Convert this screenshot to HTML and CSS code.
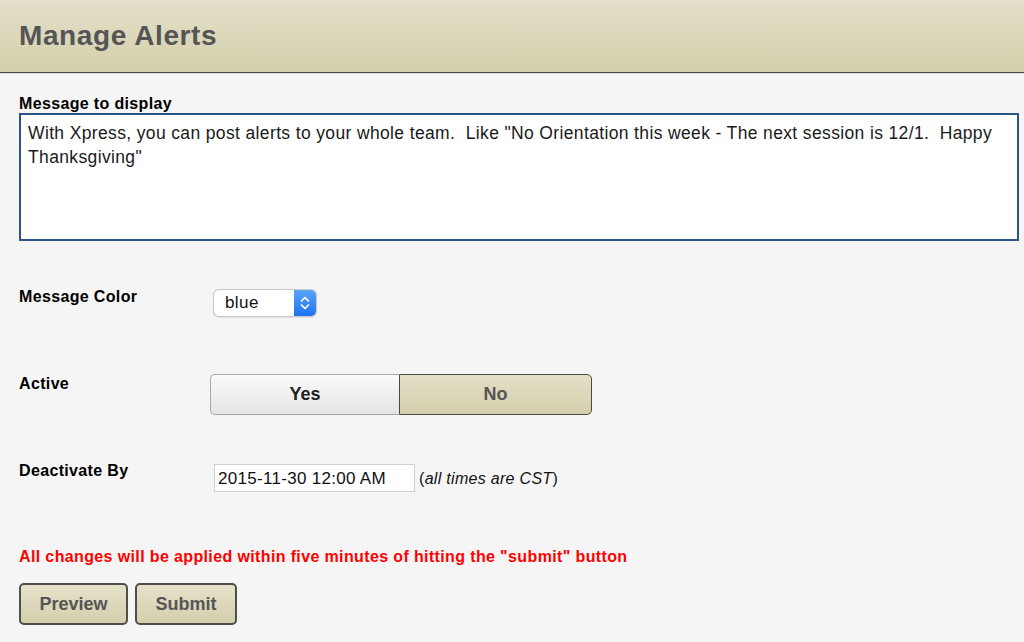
FILE: index.html
```html
<!DOCTYPE html>
<html>
<head>
<meta charset="utf-8">
<link rel="stylesheet" href="styles.css">
</head>
<body>
<header class="header">
  <h1 class="title">Manage Alerts</h1>
</header>
<main class="content">
  <label class="label-top">Message to display</label>
  <div class="textarea">With Xpress, you can post alerts to your whole team.&nbsp; Like "No Orientation this week - The next session is 12/1.&nbsp; Happy Thanksgiving"</div>

  <div class="row row-color">
    <div class="label">Message Color</div>
    <div class="select">
      <span class="select-text">blue</span>
      <span class="select-arrow">
        <svg width="12" height="18" viewBox="0 0 12 18"><path d="M2.5 7 L6 3.5 L9.5 7 M2.5 11 L6 14.5 L9.5 11" fill="none" stroke="#fff" stroke-width="1.7" stroke-linecap="round" stroke-linejoin="round"/></svg>
      </span>
    </div>
  </div>

  <div class="row row-active">
    <div class="label">Active</div>
    <div class="toggle">
      <div class="toggle-opt toggle-yes">Yes</div>
      <div class="toggle-opt toggle-no">No</div>
    </div>
  </div>

  <div class="row row-date">
    <div class="label">Deactivate By</div>
    <div class="date-input">2015-11-30 12:00 AM</div>
    <span class="note">(<i>all times are CST</i>)</span>
  </div>

  <p class="warning">All changes will be applied within five minutes of hitting the "submit" button</p>

  <div class="buttons">
    <button class="btn btn-preview">Preview</button>
    <button class="btn btn-submit">Submit</button>
  </div>
</main>
</body>
</html>
```
FILE: styles.css
```css
html, body {
  margin: 0;
  padding: 0;
}
body {
  background: #f5f5f5;
  font-family: "Liberation Sans", Arial, Helvetica, sans-serif;
  color: #000;
  width: 1024px;
  height: 642px;
  overflow: hidden;
}
.header {
  height: 72px;
  background: linear-gradient(#e5e1ca, #d3ceab);
  border-bottom: 1px solid #4a4a45;
  box-shadow: 0 1px 0 #dcdcdc;
  display: flex;
  align-items: center;
  padding-left: 19px;
}
.title {
  margin: 0;
  font-size: 28px;
  letter-spacing: 0.6px;
  font-weight: bold;
  color: #555;
}
.content {
  padding: 0 5px 0 19px;
}
.label-top {
  display: block;
  font-size: 16px;
  letter-spacing: 0.35px;
  font-weight: bold;
  margin-top: 21px;
  line-height: 19px;
}
.textarea {
  box-sizing: border-box;
  width: 1000px;
  height: 128px;
  background: #fff;
  border: 2px solid #2d5486;
  padding: 6px 7px;
  font-size: 17.5px;
  letter-spacing: 0.36px;
  line-height: 24px;
  color: #1a1a1a;
}
.row {
  display: flex;
  align-items: flex-start;
}
.label {
  width: 191px;
  font-size: 16px;
  letter-spacing: 0.35px;
  font-weight: bold;
  line-height: 19px;
}
.row-color {
  margin-top: 46px;
}
.row-color .label {
  width: 195px;
}
.select {
  margin-top: 3px;
  width: 102px;
  height: 26px;
  box-sizing: border-box;
  border-radius: 5px;
  background: #fff;
  box-shadow: 0 0 0 1px #c9c9c9, 0 1px 2px rgba(0,0,0,0.25);
  display: flex;
  overflow: hidden;
}
.select-text {
  flex: 1;
  font-size: 17px;
  letter-spacing: 0.4px;
  line-height: 26px;
  padding-left: 11px;
  color: #111;
}
.select-arrow {
  width: 22px;
  background: linear-gradient(#5aa4f9, #1d73f0);
  display: flex;
  align-items: center;
  justify-content: center;
}
.row-active {
  margin-top: 58px;
}
.toggle {
  display: flex;
  width: 382px;
  height: 41px;
}
.toggle-opt {
  box-sizing: border-box;
  display: flex;
  align-items: center;
  justify-content: center;
  font-size: 18px;
  font-weight: bold;
}
.toggle-yes {
  width: 189px;
  background: linear-gradient(#fbfbfb, #e4e4e4);
  border: 1px solid #a8a8a0;
  border-right: none;
  border-radius: 5px 0 0 5px;
  color: #222;
}
.toggle-no {
  flex: 1;
  background: linear-gradient(#e3dfc6, #d4cfac);
  border: 1px solid #4a4a45;
  border-radius: 0 5px 5px 0;
  color: #555;
}
.row-date {
  margin-top: 46px;
}
.row-date .label {
  width: 195px;
}
.date-input {
  margin-top: 3px;
  box-sizing: border-box;
  width: 201px;
  height: 28px;
  background: #fff;
  border: 1px solid #d0d0d0;
  font-size: 17px;
  letter-spacing: 0.3px;
  line-height: 27px;
  padding-left: 3px;
  color: #111;
}
.note {
  margin-top: 3px;
  margin-left: 4px;
  font-size: 16px;
  letter-spacing: 0.3px;
  line-height: 30px;
  color: #111;
}
.warning {
  margin: 53px 0 0 0;
  color: #ff0000;
  font-size: 16px;
  letter-spacing: 0.37px;
  font-weight: bold;
  line-height: 19px;
}
.buttons {
  display: flex;
  gap: 7px;
  margin-top: 17px;
}
.btn {
  box-sizing: border-box;
  height: 42px;
  background: linear-gradient(#e6e2cb, #d3ceab);
  border: 2px solid #4f4f4a;
  border-radius: 5px;
  font-family: "Liberation Sans", Arial, sans-serif;
  font-size: 18px;
  font-weight: bold;
  color: #555;
  padding: 0;
}
.btn-preview {
  width: 109px;
}
.btn-submit {
  width: 102px;
}
```
